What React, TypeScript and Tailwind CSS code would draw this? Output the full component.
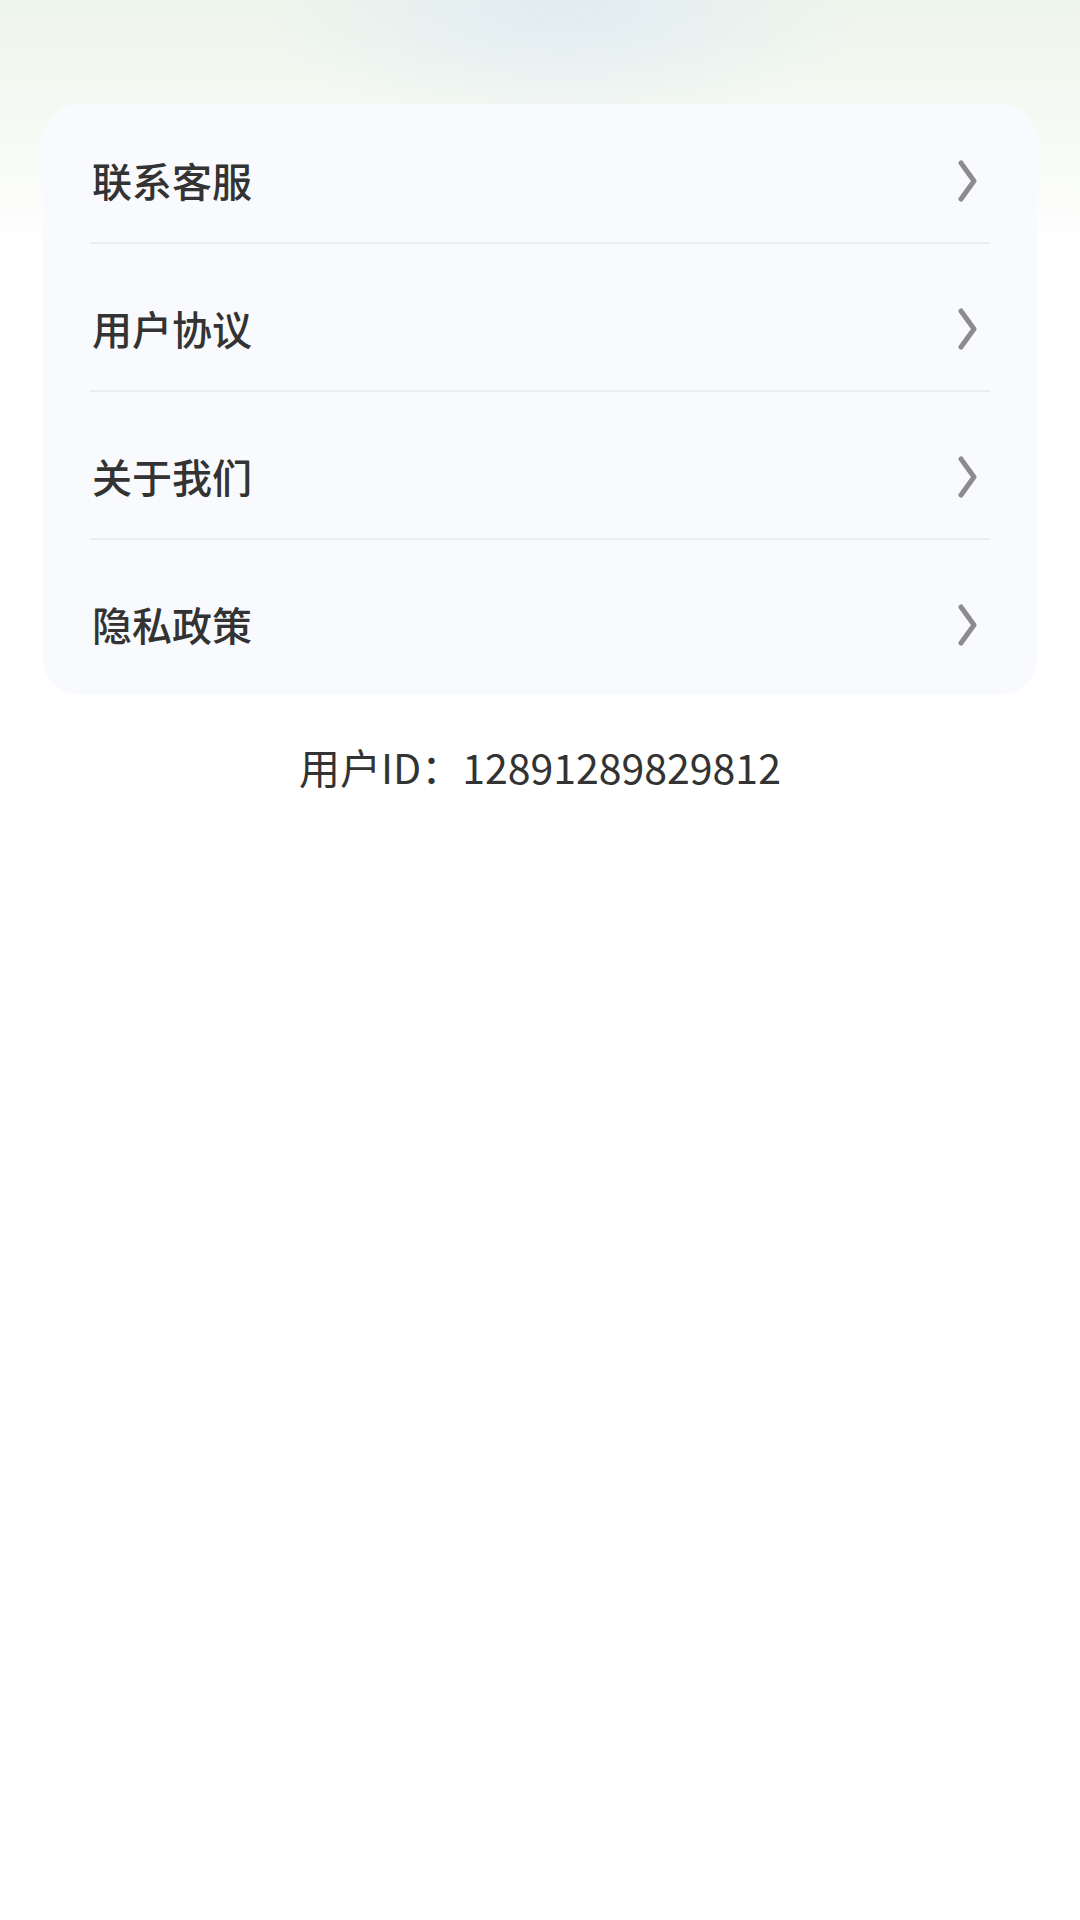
import React from 'react';

const menuItems = [
  { label: '联系客服', first: true },
  { label: '用户协议' },
  { label: '关于我们' },
  { label: '隐私政策', last: true },
];

const Chevron: React.FC = () => (
  <svg width="22" height="42" viewBox="0 0 22 42" fill="none" className="mr-[12px]">
    <polyline points="5,3 18,21 5,39" stroke="#8c8c8c" strokeWidth="5" strokeLinecap="round" strokeLinejoin="round" />
  </svg>
);

export default function App() {
  return (
    <div
      className="min-h-[1920px] w-full bg-white bg-[radial-gradient(ellipse_300px_120px_at_52%_10px,rgba(220,232,244,0.7),transparent),linear-gradient(180deg,#eef5ec_0px,#f5f9f3_110px,#ffffff_260px)] px-[43px] pt-[104px]"
      style={{ fontFamily: '"Noto Sans CJK SC", "Noto Sans", sans-serif' }}
    >
      <div className="w-full rounded-[36px] bg-[#f9fafd] px-[47px]">
        {menuItems.map((item, i) => (
          <div key={i}>
            <div
              className={
                item.first
                  ? 'flex h-[138px] items-start justify-between pt-[56px]'
                  : item.last
                  ? 'flex h-[155px] items-start justify-between pt-[64px]'
                  : 'flex h-[146px] items-start justify-between pt-[64px]'
              }
            >
              <span className="pl-[2px] text-[40px] leading-[40px] font-medium text-[#333333]">{item.label}</span>
              <Chevron />
            </div>
            {!item.last && <div className="h-[2px] w-full bg-[#ebedf1]" />}
          </div>
        ))}
      </div>

      <p className="mt-[51px] text-center text-[41px] leading-[40px] font-normal text-[#333333]">用户ID：12891289829812</p>
    </div>
  );
}
